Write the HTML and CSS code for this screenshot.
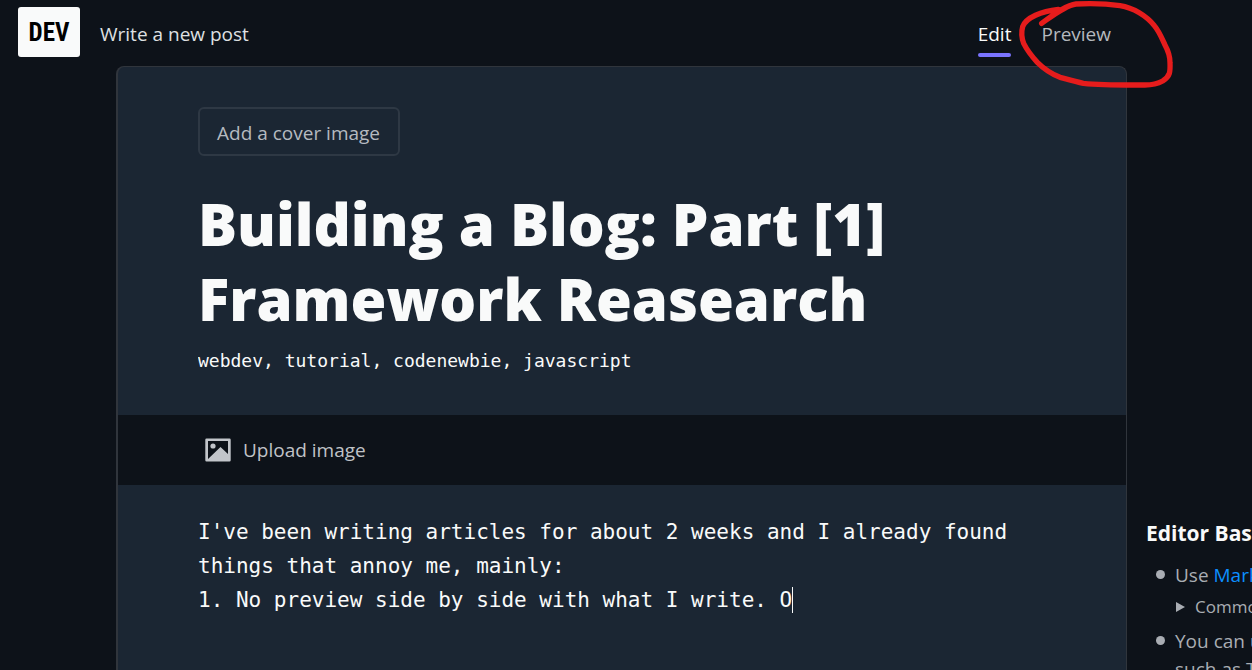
FILE: index.html
```html
<!DOCTYPE html>
<html lang="en">
<head>
<meta charset="utf-8">
<meta name="viewport" content="width=device-width, initial-scale=1">
<title>Write a new post</title>
<link rel="stylesheet" href="styles.css">
</head>
<body>
<header class="topbar">
  <div class="topbar-inner">
    <a class="logo" href="#">DEV</a>
    <span class="page-name">Write a new post</span>
    <nav class="tabs">
      <button class="tab tab-current" type="button">Edit</button>
      <div class="tab-wrap">
        <button class="tab" type="button">Preview</button>
        <svg class="scribble" viewBox="168 0 480 270" aria-hidden="true">
          <path d="M245 70C276 48 318 15 348 12C388 10 440 11 480 17C520 23 560 48 583 77C598 95 607 118 615 135C626 155 630 167 630 188C631 215 631 228 608 243C590 253 575 255 555 255C480 255 430 256 370 250C345 245 322 238 300 232C270 220 248 203 232 187C212 165 200 148 191 130C183 108 184 94 188 80C198 52 245 34 295 28"/>
        </svg>
      </div>
    </nav>
  </div>
</header>
<main class="layout">
  <form class="card">
    <div class="card-head">
      <button class="cover-button" type="button">Add a cover image</button>
      <textarea class="title" rows="2" aria-label="Post title" spellcheck="false">Building a Blog: Part [1] Framework Reasearch</textarea>
      <input class="tags" type="text" aria-label="Tags" spellcheck="false" value="webdev, tutorial, codenewbie, javascript">
    </div>
    <div class="toolbar">
      <button class="upload" type="button">
        <svg class="upload-icon" viewBox="0 0 26 24" aria-hidden="true">
          <path fill-rule="evenodd" d="M1.500 0.500h23a1.200 1.200 0 0 1 1.200 1.200v20.600a1.200 1.200 0 0 1-1.200 1.200h-23a1.200 1.200 0 0 1-1.200-1.200V1.700A1.200 1.200 0 0 1 1.500.5zM3 3v18L15.500 9 23 16V3z"/>
          <circle cx="8" cy="8" r="2.600"/>
        </svg>
        Upload image
      </button>
    </div>
    <div class="editor">
      <textarea class="body-text" rows="4" aria-label="Post content" spellcheck="false">I've been writing articles for about 2 weeks and I already found things that annoy me, mainly:
1. No preview side by side with what I write. O</textarea>
      <span class="caret"></span>
    </div>
  </form>
  <aside class="help">
    <h2 class="help-title">Editor Basics</h2>
    <ul class="help-list">
      <li>Use <a href="#">Markdown</a> to write and format posts.
        <details class="syntax"><summary>Commonly used syntax</summary></details>
      </li>
      <li>You can use <a href="#">Liquid tags</a> to add rich content<br>such as Tweets, YouTube videos, etc.</li>
    </ul>
  </aside>
</main>
</body>
</html>
```
FILE: styles.css
```css
* {
  box-sizing: border-box;
}

body {
  margin: 0;
  height: 100vh;
  display: flex;
  flex-direction: column;
  overflow: hidden;
  background: #0d1219;
  color: #f9fafa;
  font-family: "Open Sans", "Noto Sans", sans-serif;
  font-size: 19px;
  line-height: 28px;
}

button,
input,
textarea {
  margin: 0;
  padding: 0;
  border: 0;
  background: none;
  color: inherit;
  font: inherit;
}

textarea {
  display: block;
  width: 100%;
  resize: none;
  overflow: hidden;
  outline: none;
}

a {
  color: #0c8fff;
  text-decoration: none;
}

.topbar {
  flex: none;
  height: 66px;
  padding: 7px 0 0 18px;
}

.topbar-inner {
  display: flex;
  align-items: flex-start;
  max-width: 1109px;
  padding-right: 16px;
}

.logo {
  width: 62px;
  height: 50px;
  border-radius: 3px;
  background: #f9fafa;
  color: #000;
  font: bold 25px/52px "Liberation Sans Narrow", "Roboto Condensed", "Liberation Sans", sans-serif;
  text-align: center;
}

.page-name {
  margin-left: 20px;
  padding-top: 13px;
  color: #dfe0e2;
}

.tabs {
  display: flex;
  gap: 30px;
  margin-left: auto;
}

.tab {
  height: 50px;
  padding-top: 4px;
  color: #b4b8be;
}

.tab-current {
  position: relative;
  color: #f9fafa;
}

.tab-current::after {
  content: "";
  position: absolute;
  inset: auto 0 0;
  height: 4px;
  border-radius: 2px;
  background: #7a74ff;
}

.tab-wrap {
  position: relative;
}

.scribble {
  position: absolute;
  left: -25px;
  top: -7px;
  z-index: 2;
  width: 160px;
  height: 90px;
  pointer-events: none;
}

.scribble path {
  fill: none;
  stroke: #e61c1c;
  stroke-width: 16;
  stroke-linecap: round;
  stroke-linejoin: round;
}

.layout {
  flex: 1;
  display: flex;
  min-height: 0;
  padding-left: 116px;
}

.card {
  flex: 0 1 1011px;
  display: flex;
  flex-direction: column;
  border: 1px solid #30353c;
  border-width: 1px 1px 0 2px;
  border-radius: 8px 8px 0 0;
  background: #1b2633;
}

.card-head {
  padding: 40px 80px 43px;
}

.cover-button {
  display: block;
  height: 49px;
  padding: 2px 18px 0 17px;
  border: 2px solid #2e3844;
  border-radius: 6px;
  color: #b5bac0;
}

.title {
  margin: 30px 0 14px;
  font-size: 58px;
  font-weight: 800;
  line-height: 75px;
}

.tags {
  display: block;
  width: 100%;
  font: 18px/22px "DejaVu Sans Mono", "Liberation Mono", monospace;
}

.toolbar {
  height: 70px;
  padding: 0 80px;
  background: #0d1219;
}

.upload {
  display: flex;
  align-items: center;
  gap: 12px;
  height: 70px;
  padding-left: 7px;
  color: #c0c3c7;
}

.upload-icon {
  width: 26px;
  height: 24px;
  fill: #c2c5ca;
}

.editor {
  position: relative;
  margin: 30px 80px 0;
  font: 21px/34px "DejaVu Sans Mono", "Liberation Mono", monospace;
}

.caret {
  position: absolute;
  left: 47ch;
  top: 72px;
  width: 1px;
  height: 26px;
  background: #f9fafa;
}

.help {
  flex: 1 0 106px;
  overflow: hidden;
  padding: 453px 0 0 19px;
  white-space: nowrap;
  color: #a9adb3;
}

.help-title {
  margin: 0 0 14px;
  color: #f9fafa;
  font-size: 21px;
  font-weight: 700;
  line-height: 28px;
}

.help-list {
  margin: 0;
  padding-left: 29px;
  list-style: none;
}

.help-list li {
  position: relative;
}

.help-list li::before {
  content: "";
  position: absolute;
  left: -19px;
  top: 9px;
  width: 9px;
  height: 9px;
  border-radius: 50%;
  background: #a9adb3;
}

.syntax {
  padding: 4px 0 6px;
  font-size: 17px;
}

.syntax summary {
  display: flex;
  align-items: center;
  gap: 10px;
}

.syntax summary::before {
  content: "";
  margin-left: 1px;
  border: 5px solid transparent;
  border-left: 9px solid #a9adb3;
  border-right: 0;
}
```
